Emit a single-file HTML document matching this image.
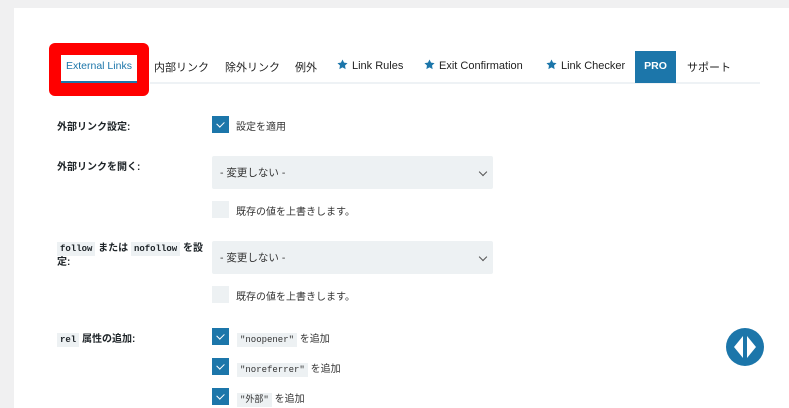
<!DOCTYPE html>
<html><head><meta charset="utf-8"><style>
*{margin:0;padding:0;box-sizing:border-box}
body{width:789px;height:408px;background:#f0f0f1;position:relative;overflow:hidden;font-family:"Liberation Sans","Noto Sans CJK JP",sans-serif;color:#1d2327}
.panel{position:absolute;left:14px;top:8px;right:0;bottom:0;background:#fff}
.a{position:absolute;white-space:nowrap}
.tab{font-size:11px;top:59px;color:#222}
.star{display:inline-block;width:11px;height:11px;vertical-align:-1px;margin-right:4px}
.lbl{font-size:10px;font-weight:bold;left:57px}
.cb{position:absolute;left:212px;width:17px;height:17px;background:#edf1f3}
.cb.on{background:#1c76aa}
.cb.on::after{content:"";position:absolute;left:6px;top:4px;width:4px;height:6px;border:solid #fff;border-width:0 1.5px 1.5px 0;transform:rotate(45deg)}
.sel{position:absolute;left:212px;width:281px;height:33px;background:#edf1f3;border-radius:2px;font-size:10.5px;color:#333;padding:9px 0 0 8px}
.sel::after{content:"";position:absolute;right:7px;top:13px;width:5px;height:5px;border:solid #555;border-width:0 1px 1px 0;transform:rotate(45deg)}
.t{font-size:10px;color:#333}
code{font-family:"Liberation Mono",monospace;background:#edf1f3;padding:2px 3px;font-size:9px;font-weight:bold}
.t code{font-weight:normal}
</style></head><body>
<div class="panel"></div>
<div class="a" style="left:49px;top:43px;width:100px;height:53px;background:#f00;border-radius:6px"></div>
<div class="a" style="left:61px;top:55px;width:76px;height:28px;background:#fff;border-bottom:2px solid #1c76aa"></div>
<div class="a" style="left:150px;top:82px;width:610px;height:2px;background:#eef2f5"></div>
<div class="a tab" style="left:66px;color:#1c76aa;font-size:10.5px;top:60px">External Links</div>
<div class="a tab" style="left:154px">内部リンク</div>
<div class="a tab" style="left:225px">除外リンク</div>
<div class="a tab" style="left:295px">例外</div>
<div class="a tab" style="left:337px"><svg class="star" viewBox="0 0 24 24"><path fill="#1c76aa" d="M12 1l3.4 7 7.6 1-5.5 5.3 1.3 7.7L12 18.3 5.2 22l1.3-7.7L1 9l7.6-1z"/></svg>Link Rules</div>
<div class="a tab" style="left:424px"><svg class="star" viewBox="0 0 24 24"><path fill="#1c76aa" d="M12 1l3.4 7 7.6 1-5.5 5.3 1.3 7.7L12 18.3 5.2 22l1.3-7.7L1 9l7.6-1z"/></svg>Exit Confirmation</div>
<div class="a tab" style="left:546px"><svg class="star" viewBox="0 0 24 24"><path fill="#1c76aa" d="M12 1l3.4 7 7.6 1-5.5 5.3 1.3 7.7L12 18.3 5.2 22l1.3-7.7L1 9l7.6-1z"/></svg>Link Checker</div>
<div class="a" style="left:635px;top:51px;width:41px;height:32px;background:#1c76aa;color:#fff;font-size:10.5px;font-weight:bold;text-align:center;line-height:30px">PRO</div>
<div class="a tab" style="left:687px">サポート</div>

<div class="a lbl" style="top:118px">外部リンク設定:</div>
<div class="cb on" style="top:116px"></div>
<div class="a t" style="left:236px;top:118px">設定を適用</div>

<div class="a lbl" style="top:158px">外部リンクを開く:</div>
<div class="sel" style="top:156px">- 変更しない -</div>
<div class="cb" style="top:201px"></div>
<div class="a t" style="left:236px;top:203px">既存の値を上書きします。</div>

<div class="a lbl" style="top:242px;line-height:13px"><code>follow</code> または <code>nofollow</code> を設<br>定:</div>
<div class="sel" style="top:241px">- 変更しない -</div>
<div class="cb" style="top:286px"></div>
<div class="a t" style="left:236px;top:288px">既存の値を上書きします。</div>

<div class="a lbl" style="top:330px"><code>rel</code> 属性の追加:</div>
<div class="cb on" style="top:328px"></div>
<div class="a t" style="left:237px;top:330px"><code>"noopener"</code> を追加</div>
<div class="cb on" style="top:358px"></div>
<div class="a t" style="left:237px;top:360px"><code>"noreferrer"</code> を追加</div>
<div class="cb on" style="top:388px"></div>
<div class="a t" style="left:237px;top:390px"><code>"外部"</code> を追加</div>

<svg class="a" style="left:725px;top:327px" width="40" height="40" viewBox="0 0 40 40"><circle cx="20" cy="20" r="19" fill="#1c76aa"/><path fill="#fff" d="M18 9L9 20l9 11zM22 9l9 11-9 11z"/></svg>
</body></html>
